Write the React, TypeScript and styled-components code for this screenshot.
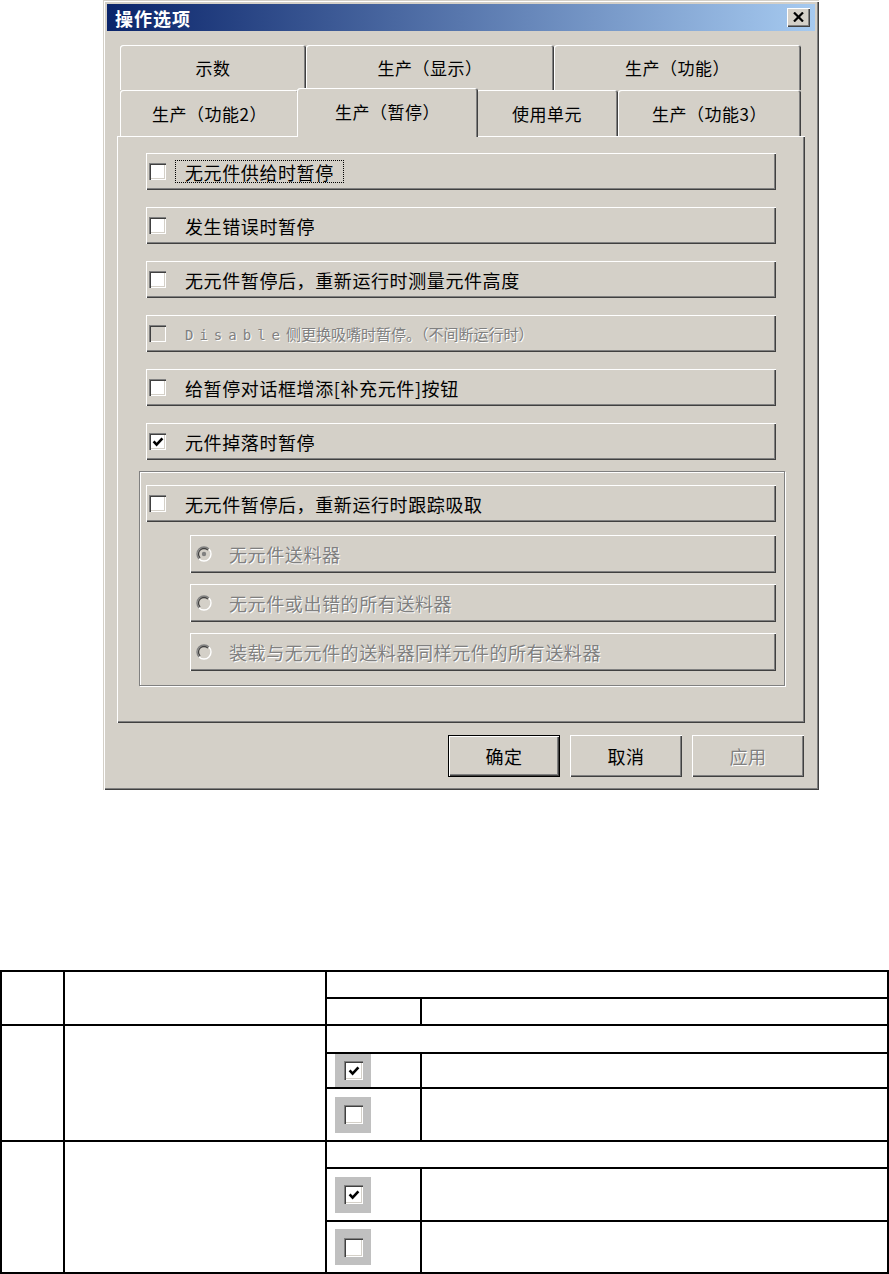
import React from "react";
import styled, { createGlobalStyle, css } from "styled-components";

const FACE = "#d4d0c8";
const SHADOW = "#808080";
const DARK = "#404040";

const GlobalStyle = createGlobalStyle`
  html, body {
    margin: 0;
    padding: 0;
    background: #fff;
  }
  body {
    font-family: "Noto Sans CJK SC", "Noto Sans", sans-serif;
    color: #000;
  }
  * {
    box-sizing: border-box;
  }
`;

const raised = css`
  background: ${FACE};
  box-shadow: inset 1px 1px 0 #fff, inset -1px -1px 0 ${DARK},
    inset -2px -2px 0 ${SHADOW};
`;

const disabledText = css`
  color: ${SHADOW};
  text-shadow: 1px 1px 0 #fff;
`;

function CheckBox({
  checked,
  disabled,
  size = 17,
}: {
  checked?: boolean;
  disabled?: boolean;
  size?: number;
}) {
  return (
    <Box $size={size} $disabled={disabled}>
      {checked && (
        <svg width={12} height={12} viewBox="0 0 12 12">
          <path d="M1.6 5.4 L4.6 8.6 L10.4 2.4" stroke="#000" strokeWidth={2.6} fill="none" />
        </svg>
      )}
    </Box>
  );
}

function Radio({ checked }: { checked?: boolean }) {
  return (
    <RadioIcon width={16} height={16} viewBox="0 0 16 16">
      <circle cx={8} cy={8} r={7} fill={FACE} />
      <path d="M3.05 12.95 A7 7 0 0 1 12.95 3.05" stroke={SHADOW} strokeWidth={1.4} fill="none" />
      <path d="M12.95 3.05 A7 7 0 0 1 3.05 12.95" stroke="#fff" strokeWidth={1.4} fill="none" />
      <path d="M4.1 11.9 A5.5 5.5 0 0 1 11.9 4.1" stroke={DARK} strokeWidth={1.3} fill="none" />
      {checked && <circle cx={8} cy={8} r={2.2} fill={SHADOW} />}
    </RadioIcon>
  );
}

function OptionRow({
  label,
  checked,
  disabled,
  focused,
}: {
  label: React.ReactNode;
  checked?: boolean;
  disabled?: boolean;
  focused?: boolean;
}) {
  return (
    <CheckRow>
      <CheckBox checked={checked} disabled={disabled} />
      <Label $focused={focused} $disabled={disabled}>
        {label}
      </Label>
    </CheckRow>
  );
}

const topTabs = [
  { label: "示数", w: 186 },
  { label: "生产（显示）", w: 248 },
  { label: "生产（功能）", w: 247 },
];

const midTabs = [
  { label: "生产（功能2）", w: 179 },
  { label: "生产（暂停）", w: 177, active: true },
  { label: "使用单元", w: 142 },
  { label: "生产（功能3）", w: 183 },
];

const radios = [
  { label: "无元件送料器", checked: true },
  { label: "无元件或出错的所有送料器" },
  { label: "装载与无元件的送料器同样元件的所有送料器" },
];

function OptionsDialog() {
  return (
    <Dialog>
      <TitleBar>
        <Title>操作选项</Title>
        <CloseButton>
          <svg width={11} height={10} viewBox="0 0 11 10">
            <path d="M1 0.5 L10 9.5 M10 0.5 L1 9.5" stroke="#000" strokeWidth={2.2} />
          </svg>
        </CloseButton>
      </TitleBar>
      <Body>
        <TabStrip>
          <TabRow $h={45}>
            {topTabs.map((t) => (
              <Tab key={t.label} $w={t.w}>
                {t.label}
              </Tab>
            ))}
          </TabRow>
          <TabRow $h={46}>
            {midTabs.map((t) =>
              t.active ? (
                <ActiveTab key={t.label} $w={t.w}>
                  {t.label}
                </ActiveTab>
              ) : (
                <Tab key={t.label} $w={t.w}>
                  {t.label}
                </Tab>
              )
            )}
          </TabRow>
        </TabStrip>
        <Panel>
          <CheckList>
            <OptionRow label="无元件供给时暂停" focused />
            <OptionRow label="发生错误时暂停" />
            <OptionRow label="无元件暂停后，重新运行时测量元件高度" />
            <OptionRow
              disabled
              label={
                <Small>
                  <Mono>Disable</Mono>侧更换吸嘴时暂停。（不间断运行时）
                </Small>
              }
            />
            <OptionRow label="给暂停对话框增添[补充元件]按钮" />
            <OptionRow label="元件掉落时暂停" checked />
          </CheckList>
          <GroupBox>
            <OptionRow label="无元件暂停后，重新运行时跟踪吸取" />
            <RadioList>
              {radios.map((r) => (
                <RadioRow key={r.label}>
                  <Radio checked={r.checked} />
                  <Label $disabled>{r.label}</Label>
                </RadioRow>
              ))}
            </RadioList>
          </GroupBox>
        </Panel>
        <ButtonBar>
          <PushButton $default>确定</PushButton>
          <PushButton>取消</PushButton>
          <PushButton $disabled>应用</PushButton>
        </ButtonBar>
      </Body>
    </Dialog>
  );
}

function TableCheck({ checked }: { checked?: boolean }) {
  return (
    <CheckShot>
      <CheckBox checked={checked} size={19} />
    </CheckShot>
  );
}

function SpecTable() {
  return (
    <Sheet>
      <Cell $c={1} $r={1} $rs={2} />
      <Cell $c={2} $r={1} $rs={2} />
      <Cell $c={3} $r={1} $cs={2} />
      <Cell $c={3} $r={2} />
      <Cell $c={4} $r={2} />

      <Cell $c={1} $r={3} $rs={3} />
      <Cell $c={2} $r={3} $rs={3} />
      <Cell $c={3} $r={3} $cs={2} />
      <Cell $c={3} $r={4}>
        <TableCheck checked />
      </Cell>
      <Cell $c={4} $r={4} />
      <Cell $c={3} $r={5}>
        <TableCheck />
      </Cell>
      <Cell $c={4} $r={5} />

      <Cell $c={1} $r={6} $rs={3} />
      <Cell $c={2} $r={6} $rs={3} />
      <Cell $c={3} $r={6} $cs={2} />
      <Cell $c={3} $r={7}>
        <TableCheck checked />
      </Cell>
      <Cell $c={4} $r={7} />
      <Cell $c={3} $r={8}>
        <TableCheck />
      </Cell>
      <Cell $c={4} $r={8} />
    </Sheet>
  );
}

export default function App() {
  return (
    <>
      <GlobalStyle />
      <Page>
        <OptionsDialog />
        <SpecTable />
      </Page>
    </>
  );
}

const Page = styled.div`
  width: 889px;
`;

const Dialog = styled.div`
  margin-left: 103px;
  width: 716px;
  padding: 4px;
  background: ${FACE};
  box-shadow: inset 1px 1px 0 ${FACE}, inset 2px 2px 0 #fff,
    inset -1px -1px 0 ${DARK}, inset -2px -2px 0 ${SHADOW};
`;

const TitleBar = styled.div`
  height: 27px;
  display: flex;
  align-items: center;
  justify-content: space-between;
  padding: 0 5px 0 8px;
  background: linear-gradient(to right, #0a246a, #a6caf0);
`;

const Title = styled.span`
  color: #fff;
  font-size: 18px;
  font-weight: 700;
  letter-spacing: 1px;
`;

const CloseButton = styled.span`
  ${raised};
  width: 23px;
  height: 19px;
  display: flex;
  align-items: center;
  justify-content: center;
  padding: 0 1px 1px 0;
`;

const Body = styled.div`
  padding: 14px 10px 9px 10px;
`;

const TabStrip = styled.div`
  padding: 0 4px 0 3px;
`;

const TabRow = styled.div<{ $h: number }>`
  display: flex;
  height: ${(p) => p.$h}px;
`;

const Tab = styled.div<{ $w: number }>`
  width: ${(p) => p.$w}px;
  flex: none;
  display: flex;
  align-items: center;
  justify-content: center;
  background: ${FACE};
  border-radius: 3px 3px 0 0;
  box-shadow: inset 1px 1px 0 #fff, inset -1px 0 0 ${DARK},
    inset -2px 0 0 ${SHADOW};
  font-size: 17px;
  letter-spacing: 0.5px;
`;

const ActiveTab = styled(Tab)`
  width: ${(p) => p.$w + 4}px;
  margin: -2px -2px -1px;
  padding-bottom: 3px;
  position: relative;
  z-index: 1;
`;

const Panel = styled.div`
  height: 587px;
  padding: 17px 0 0 22px;
  background: ${FACE};
  box-shadow: inset 1px 1px 0 #fff, inset -1px -1px 0 ${DARK},
    inset -2px -2px 0 ${SHADOW};
`;

const CheckList = styled.div`
  display: flex;
  flex-direction: column;
  gap: 17px;
  padding-left: 7px;
`;

const CheckRow = styled.div`
  ${raised};
  width: 630px;
  height: 37px;
  display: flex;
  align-items: center;
  padding-left: 3px;
`;

const Box = styled.span<{ $size: number; $disabled?: boolean }>`
  width: ${(p) => p.$size}px;
  height: ${(p) => p.$size}px;
  flex: none;
  display: inline-flex;
  align-items: center;
  justify-content: center;
  padding: 1px 0 0 1px;
  background: ${(p) => (p.$disabled ? FACE : "#fff")};
  box-shadow: inset 1px 1px 0 ${SHADOW}, inset 2px 2px 0 ${DARK},
    inset -1px -1px 0 #fff, inset -2px -2px 0 ${FACE};
`;

const Label = styled.span<{ $focused?: boolean; $disabled?: boolean }>`
  margin-left: 9px;
  padding: 0 9px;
  height: 23px;
  display: inline-flex;
  align-items: center;
  border: 1px dotted ${(p) => (p.$focused ? "#000" : "transparent")};
  font-size: 18px;
  letter-spacing: 0.6px;
  white-space: nowrap;
  ${(p) => p.$disabled && disabledText};
`;

const Small = styled.span`
  font-size: 15px;
  letter-spacing: 0;
`;

const Mono = styled.span`
  font-family: "DejaVu Sans Mono", "Liberation Mono", monospace;
  font-size: 14px;
  letter-spacing: 6px;
`;

const GroupBox = styled.div`
  margin-top: 11px;
  width: 646px;
  padding: 13px 8px 14px 6px;
  border: 1px solid ${SHADOW};
  box-shadow: 1px 1px 0 #fff, inset 1px 1px 0 #fff;
`;

const RadioList = styled.div`
  display: flex;
  flex-direction: column;
  gap: 11px;
  margin: 13px 0 0 44px;
`;

const RadioRow = styled.div`
  ${raised};
  width: 586px;
  height: 38px;
  display: flex;
  align-items: center;
  padding-left: 6px;
`;

const RadioIcon = styled.svg`
  flex: none;
  margin-right: -2px;
`;

const ButtonBar = styled.div`
  margin-top: 12px;
  display: flex;
  justify-content: flex-end;
  gap: 10px;
  padding-right: 1px;
`;

const PushButton = styled.div<{ $default?: boolean; $disabled?: boolean }>`
  ${raised};
  width: 112px;
  height: 42px;
  display: flex;
  align-items: center;
  justify-content: center;
  font-size: 18px;
  letter-spacing: 0.5px;
  border: ${(p) => (p.$default ? "1px solid #000" : "none")};
  ${(p) => p.$disabled && disabledText};
`;

const Sheet = styled.div`
  margin-top: 180px;
  width: 889px;
  display: grid;
  grid-template-columns: 61px 260px 93px 465px;
  grid-template-rows: 25px 25px 26px 33px 51px 25px 51px 50px;
  gap: 2px;
  padding: 2px;
  background: #000;
`;

const Cell = styled.div<{ $c: number; $r: number; $cs?: number; $rs?: number }>`
  grid-column: ${(p) => p.$c} / span ${(p) => p.$cs ?? 1};
  grid-row: ${(p) => p.$r} / span ${(p) => p.$rs ?? 1};
  background: #fff;
  display: flex;
  align-items: center;
  padding-left: 8px;
`;

const CheckShot = styled.div`
  width: 36px;
  height: 36px;
  max-height: 100%;
  background: #c0c0c0;
  display: flex;
  align-items: center;
  justify-content: center;
`;
